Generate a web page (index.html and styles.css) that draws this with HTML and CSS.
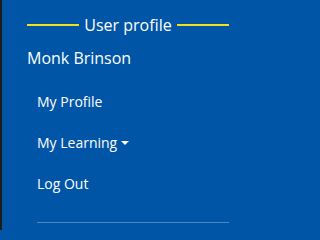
FILE: index.html
```html
<!DOCTYPE html>
<html lang="en">
<head>
<meta charset="utf-8">
<title>User profile</title>
<link rel="stylesheet" href="styles.css">
</head>
<body>
<nav class="panel">
  <div class="heading">
    <span class="rule"></span>
    <span class="heading-text">User profile</span>
    <span class="rule"></span>
  </div>
  <div class="name">Monk Brinson</div>
  <ul class="menu">
    <li class="item"><a href="#">My Profile</a></li>
    <li class="item"><a href="#">My Learning<span class="caret"></span></a></li>
    <li class="item"><a href="#">Log Out</a></li>
  </ul>
  <div class="divider"></div>
</nav>
</body>
</html>
```
FILE: styles.css
```css
html, body {
  margin: 0;
  padding: 0;
}
body {
  background: #0055a6;
  font-family: "Open Sans", "Noto Sans", sans-serif;
  color: #ffffff;
}
.panel {
  box-sizing: border-box;
  width: 253px;
  height: 230px;
  border-left: 2px solid #1b1b1b;
  padding: 14px 24px 0 25px;
}
.heading {
  display: flex;
  align-items: center;
  gap: 5px;
  height: 22px;
}
.rule {
  flex: 1;
  height: 2px;
  background: #f2e21c;
}
.heading-text {
  font-size: 16px;
  line-height: 22px;
}
.name {
  margin-top: 11px;
  font-size: 16px;
  line-height: 22px;
}
.menu {
  list-style: none;
  margin: 12px 0 0;
  padding: 0 0 0 10px;
}
.item {
  height: 41px;
  display: flex;
  align-items: center;
}
.item a {
  color: #ffffff;
  text-decoration: none;
  font-size: 14px;
  line-height: 20px;
  display: flex;
  align-items: center;
}
.caret {
  margin-left: 4px;
  width: 0;
  height: 0;
  border-left: 4px solid transparent;
  border-right: 4px solid transparent;
  border-top: 4px solid #ffffff;
}
.divider {
  margin: 18px 0 0 10px;
  height: 1px;
  background: #4a86c8;
}
```
